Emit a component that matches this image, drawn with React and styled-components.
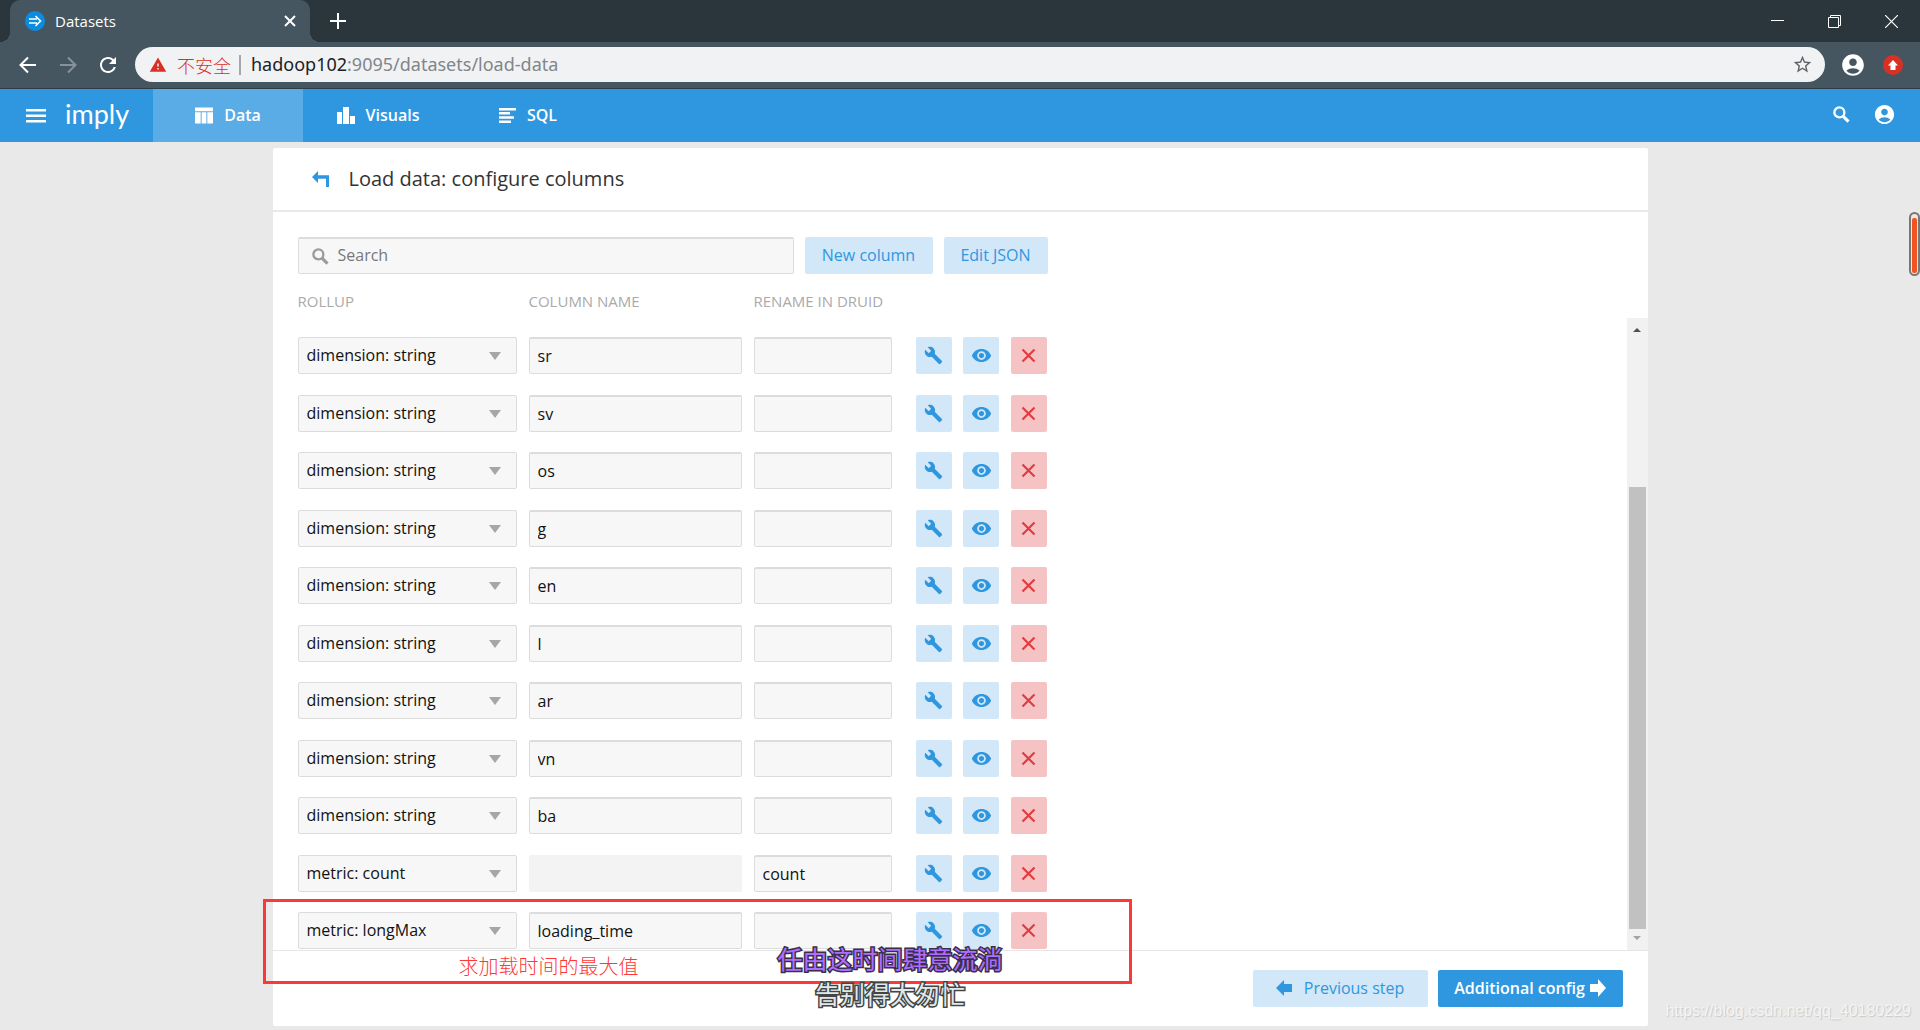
import styled, { createGlobalStyle } from "styled-components"
import {
  MdAccountCircle,
  MdBuild,
  MdRefresh,
  MdStarBorder,
  MdVisibility,
  MdWarning,
} from "react-icons/md"

const GlobalStyle = createGlobalStyle`
    * {
        box-sizing: border-box;
    }
    body {
        margin: 0;
        background-color: #e9e9e9;
        font-family: "Open Sans", "Noto Sans CJK SC", sans-serif;
        color: #111;
    }
    button, input, select {
        font-family: inherit;
    }
    button {
        border: none;
        padding: 0;
        background: none;
        color: inherit;
        cursor: pointer;
    }
    svg {
        display: block;
        flex: none;
    }
`

const Page = styled.div`
    position: relative;
    display: flex;
    flex-direction: column;
    height: 100vh;
    min-height: 800px;
    overflow: hidden;
`

/* browser window */

const TabStrip = styled.div`
    display: flex;
    align-items: center;
    flex: none;
    height: 42px;
    padding-left: 10px;
    background-color: #2b363c;
    color: white;
`

const BrowserTab = styled.div`
    position: relative;
    display: flex;
    align-items: center;
    width: 300px;
    height: 42px;
    padding: 0 14px 0 15px;
    gap: 10px;
    border-radius: 10px 10px 0 0;
    background-color: #455660;
    &::before, &::after {
        content: "";
        position: absolute;
        bottom: 0;
        width: 10px;
        height: 10px;
    }
    &::before {
        left: -10px;
        background: radial-gradient(circle at 0 0, transparent 10px, #455660 10px);
    }
    &::after {
        right: -10px;
        background: radial-gradient(circle at 100% 0, transparent 10px, #455660 10px);
    }
`

const TabTitle = styled.span`
    flex: 1;
    font-size: 15px;
    line-height: 20px;
`

const NewTab = styled.button`
    margin-left: 20px;
`

const WindowButtons = styled.div`
    display: flex;
    margin-left: auto;
`

const WindowButton = styled.button`
    display: flex;
    align-items: center;
    justify-content: center;
    width: 57px;
    height: 37px;
`

const Toolbar = styled.div`
    display: flex;
    align-items: center;
    flex: none;
    height: 47px;
    padding: 0 17px 1px 16px;
    border-bottom: 1px solid #2f3c44;
    background-color: #455660;
    color: white;
`

const NavButtons = styled.div`
    display: flex;
    gap: 16px;
    width: 119px;
`

const NavButton = styled.button`
    color: ${props => props.$dim ? "#87929a" : "white"};
`

const Omnibox = styled.div`
    display: flex;
    align-items: center;
    flex: 1;
    height: 35px;
    padding: 0 12px 0 14px;
    border-radius: 18px;
    background-color: #f1f2f4;
    color: #5f6368;
`

const Insecure = styled.span`
    display: flex;
    align-items: center;
    gap: 10px;
    padding-right: 8px;
    border-right: 2px solid #a5a7aa;
    color: #d93025;
    font-size: 18px;
    line-height: 20px;
    font-family: "Noto Sans CJK SC", sans-serif;
    font-weight: 300;
`

const Url = styled.span`
    flex: 1;
    padding: 0 0 2px 10px;
    font-family: "Noto Sans", sans-serif;
    font-size: 18px;
    line-height: 24px;
    color: #80868b;
    b {
        font-weight: 400;
        color: #202124;
    }
`

const ToolbarIcons = styled.div`
    display: flex;
    align-items: center;
    gap: 17px;
    padding-left: 15px;
`

/* application header */

const Header = styled.header`
    display: flex;
    align-items: center;
    flex: none;
    height: 53px;
    padding-right: 24px;
    background-color: #2f97df;
    color: white;
`

const Brand = styled.div`
    display: flex;
    align-items: center;
    gap: 19px;
    width: 153px;
    padding-left: 26px;
`

const Logo = styled.span`
    padding-bottom: 4px;
    font-family: Lato, sans-serif;
    font-size: 27px;
    line-height: 36px;
`

const NavLink = styled.a`
    display: flex;
    align-items: center;
    justify-content: center;
    gap: 11px;
    width: 150px;
    height: 53px;
    padding-bottom: 1px;
    background-color: ${props => props.$active ? "#59ace5" : "transparent"};
    color: white;
    font-size: 16px;
    font-weight: 600;
    text-decoration: none;
`

const HeaderIcons = styled.div`
    display: flex;
    align-items: center;
    gap: 23px;
    margin-left: auto;
    padding-bottom: 2px;
`

/* main panel */

const Panel = styled.main`
    position: relative;
    display: flex;
    flex-direction: column;
    flex: 1;
    min-height: 0;
    width: calc(100% - 24px);
    max-width: 1375px;
    margin: 6px auto 4px;
    border-radius: 2px;
    background-color: white;
`

const PanelHeader = styled.div`
    display: flex;
    align-items: center;
    gap: 18px;
    flex: none;
    height: 64px;
    padding: 0 39px;
    border-bottom: 2px solid #e9e9e9;
`

const Title = styled.h1`
    margin: 0;
    font-size: 20px;
    line-height: 28px;
    font-weight: 400;
    color: #333;
`

const Filters = styled.div`
    display: flex;
    gap: 11px;
    width: 775px;
    padding: 25px 0 0 25px;
`

const SearchBox = styled.label`
    display: flex;
    align-items: center;
    gap: 9px;
    flex: 1;
    height: 37px;
    padding-left: 13px;
    border: 1px solid #dcdcdc;
    border-top-width: 2px;
    border-radius: 2px;
    background-color: #f7f7f7;
    color: #9b9b9b;
`

const SearchInput = styled.input`
    flex: 1;
    border: none;
    outline: none;
    padding: 0 0 2px;
    background: none;
    font-size: 16px;
    &::placeholder {
        color: #777;
    }
`

const Button = styled.button`
    display: flex;
    align-items: center;
    justify-content: center;
    gap: ${props => props.$gap || 0}px;
    width: ${props => props.$width}px;
    height: 37px;
    padding-bottom: 1px;
    border-radius: 2px;
    background-color: ${props => props.$primary ? "#2f97df" : "#d2e7f8"};
    color: ${props => props.$primary ? "white" : "#2f97df"};
    font-size: 16px;
    font-weight: ${props => props.$primary ? 600 : 500};
`

const columns = `
    display: grid;
    grid-template-columns: 219px 213px 138px 131px;
    column-gap: 12px;
`

const Labels = styled.div`
    ${columns}
    padding: 17px 0 0 25px;
    height: 44px;
    font-size: 15px;
    line-height: 20px;
    color: #aaa;
`

const Body = styled.div`
    display: flex;
    flex: 1;
    min-height: 0;
`

const Rows = styled.div`
    display: flex;
    flex-direction: column;
    justify-content: space-between;
    flex: 1;
    padding: 19px 0 1px 25px;
`

const Row = styled.div`
    ${columns}
`

const SelectBox = styled.div`
    position: relative;
    &::after {
        content: "";
        position: absolute;
        right: 16px;
        top: 15px;
        border: 6px solid transparent;
        border-top: 8px solid #a6a6a6;
        border-bottom: none;
        pointer-events: none;
    }
`

const Select = styled.select`
    appearance: none;
    display: block;
    width: 100%;
    height: 37px;
    padding: 0 8px 1px;
    border: 1px solid #dcdcdc;
    border-radius: 2px;
    background-color: #f7f7f7;
    color: #111;
    font-size: 16px;
`

const Field = styled.input`
    min-width: 0;
    height: 37px;
    padding: 0 8px;
    border: 1px solid #dcdcdc;
    border-top-width: 2px;
    border-radius: 2px;
    background-color: #f7f7f7;
    color: #111;
    font-size: 16px;
    &:disabled {
        border-color: #f3f3f3;
        background-color: #f3f3f3;
    }
`

const Actions = styled.div`
    display: flex;
    justify-content: space-between;
    margin-left: 12px;
    width: 131px;
`

const Action = styled.button`
    display: flex;
    align-items: center;
    justify-content: center;
    width: 36px;
    height: 37px;
    border-radius: 2px;
    background-color: ${props => props.$danger ? "#f6c3c5" : "#d2e7f8"};
    color: ${props => props.$danger ? "#e13c40" : "#2f97df"};
`

const Scrollbar = styled.div`
    display: flex;
    flex-direction: column;
    align-items: center;
    width: 21px;
    padding: 10px 0;
    background-color: #f1f1f1;
`

const Thumb = styled.div`
    flex: 1;
    width: 17px;
    margin: 155px 0 7px;
    background-color: #c1c1c1;
`

const Arrow = styled.div`
    border: 4px solid transparent;
    border-${props => props.$up ? "bottom" : "top"}-color: ${props => props.$up ? "#505050" : "#a3a3a3"};
    border-${props => props.$up ? "top" : "bottom"}: none;
`

const Footer = styled.div`
    display: flex;
    justify-content: flex-end;
    gap: 10px;
    flex: none;
    height: 76px;
    padding: 19px 25px 0;
    border-top: 1px solid #e6e6e6;
`

/* things floating over the page */

const Highlight = styled.div`
    position: absolute;
    left: -10px;
    bottom: 42px;
    width: 869px;
    height: 85px;
    padding: 50px 0 0 193px;
    border: 3px solid #ff3737;
    color: #ff3737;
    font-family: "Noto Sans CJK SC", sans-serif;
    font-size: 20px;
    line-height: 28px;
    font-weight: 300;
    pointer-events: none;
`

const Lyrics = styled.div`
    position: absolute;
    left: 504px;
    bottom: 15px;
    width: 227px;
    font-family: "Noto Sans CJK SC", sans-serif;
    font-size: 25px;
    line-height: 35px;
    text-align: center;
    color: #dfe9ea;
    -webkit-text-stroke: 3px #444;
    paint-order: stroke fill;
    pointer-events: none;
    p {
        margin: 0;
    }
    p:first-child {
        color: #b06cff;
        -webkit-text-stroke-color: #38304a;
    }
`

const SideHandle = styled.div`
    position: absolute;
    right: 0;
    top: 212px;
    width: 11px;
    height: 64px;
    padding: 4px 1px 1px;
    border: 2px solid #777;
    border-radius: 6px;
    background-color: #f4e6e0;
    &::before {
        content: "";
        display: block;
        height: 100%;
        border-radius: 2px;
        background-color: #f05423;
    }
`

const Watermark = styled.div`
    position: absolute;
    right: 9px;
    bottom: 7px;
    font-family: "Liberation Sans", Arial, sans-serif;
    font-size: 16px;
    line-height: 24px;
    color: #f4f4f4;
    text-shadow: 1px 1px 1px #c8c8c8;
`

const SearchIcon = ({ size }) => (
  <svg width={size} height={size} viewBox="0 0 16 16" fill="none" stroke="currentColor">
    <circle cx="6" cy="6" r="4.7" strokeWidth="2.2" />
    <path d="M9.2 9.2 14.6 14.6" strokeWidth="3" />
  </svg>
)

const ArrowIcon = ({ flip }) => (
  <svg width="16" height="18" viewBox="0 0 16 18" fill="currentColor">
    <path d={flip ? "M16 9 8 0v5H0v8h8v5z" : "M0 9 8 1v4h8v8H8v4z"} />
  </svg>
)

const CrossIcon = () => (
  <svg width="15" height="15" viewBox="0 0 15 15" stroke="currentColor" strokeWidth="2.2">
    <path d="M1.5 1.5 13.5 13.5M13.5 1.5 1.5 13.5" />
  </svg>
)

const rollups = ["dimension: string", "metric: count", "metric: longMax"]

const rows = [
  { rollup: "dimension: string", name: "sr" },
  { rollup: "dimension: string", name: "sv" },
  { rollup: "dimension: string", name: "os" },
  { rollup: "dimension: string", name: "g" },
  { rollup: "dimension: string", name: "en" },
  { rollup: "dimension: string", name: "l" },
  { rollup: "dimension: string", name: "ar" },
  { rollup: "dimension: string", name: "vn" },
  { rollup: "dimension: string", name: "ba" },
  { rollup: "metric: count", name: "", rename: "count" },
  { rollup: "metric: longMax", name: "loading_time" },
]

const Browser = () => {
  return (
    <>
      <TabStrip>
        <BrowserTab>
          <svg width="20" height="20" viewBox="0 0 20 20" fill="none" stroke="white" strokeWidth="1.6">
            <circle cx="10" cy="10" r="10" fill="#0a8ce0" stroke="none" />
            <path d="M4 8h8M4 12h8M10.5 5l5 5-5 5" />
          </svg>
          <TabTitle>Datasets</TabTitle>
          <button aria-label="Close tab">
            <svg width="12" height="12" viewBox="0 0 12 12" stroke="white" strokeWidth="2">
              <path d="M1 1 11 11M11 1 1 11" />
            </svg>
          </button>
        </BrowserTab>
        <NewTab aria-label="New tab">
          <svg width="16" height="16" viewBox="0 0 16 16" stroke="white" strokeWidth="2">
            <path d="M8 0V16M0 8H16" />
          </svg>
        </NewTab>
        <WindowButtons>
          <WindowButton aria-label="Minimize">
            <svg width="13" height="13" viewBox="0 0 13 13" stroke="white">
              <path d="M0 5.5H13" />
            </svg>
          </WindowButton>
          <WindowButton aria-label="Restore">
            <svg width="13" height="13" viewBox="0 0 13 13" fill="none" stroke="white">
              <path d="M.5 2.5h10v10H.5zM2.5 2.5v-2h10v10h-2" />
            </svg>
          </WindowButton>
          <WindowButton aria-label="Close">
            <svg width="13" height="13" viewBox="0 0 13 13" stroke="white" strokeWidth="1.2">
              <path d="M0 0 13 13M13 0 0 13" />
            </svg>
          </WindowButton>
        </WindowButtons>
      </TabStrip>
      <Toolbar>
        <NavButtons>
          <NavButton aria-label="Back">
            <svg width="24" height="24" viewBox="0 0 24 24" fill="none" stroke="currentColor" strokeWidth="2">
              <path d="M20 12H4.500M12 4.500 4.500 12 12 19.500" />
            </svg>
          </NavButton>
          <NavButton aria-label="Forward" $dim>
            <svg width="24" height="24" viewBox="0 0 24 24" fill="none" stroke="currentColor" strokeWidth="2">
              <path d="M4 12H19.500M12 4.500 19.500 12 12 19.500" />
            </svg>
          </NavButton>
          <NavButton aria-label="Reload">
            <MdRefresh size={24} />
          </NavButton>
        </NavButtons>
        <Omnibox>
          <Insecure>
            <MdWarning size={18} />
            不安全
          </Insecure>
          <Url><b>hadoop102</b>:9095/datasets/load-data</Url>
          <MdStarBorder size={21} />
        </Omnibox>
        <ToolbarIcons>
          <MdAccountCircle size={26} />
          <svg width="20" height="20" viewBox="0 0 20 20" fill="white">
            <circle cx="10" cy="10" r="10" fill="#d93025" />
            <path d="M10 5 15 10.500H12.500V15H7.500V10.500H5z" />
          </svg>
        </ToolbarIcons>
      </Toolbar>
    </>
  )
}

const App = () => {
  return (
    <Page>
      <GlobalStyle />
      <Browser />
      <Header>
        <Brand>
          <svg width="20" height="14" viewBox="0 0 20 14" fill="currentColor">
            <path d="M0 0h20v2.500H0zM0 5.500h20v2.500H0zM0 11h20v2.500H0z" />
          </svg>
          <Logo>imply</Logo>
        </Brand>
        <NavLink href="#data" $active>
          <svg width="18" height="17" viewBox="0 0 19 17" fill="currentColor">
            <path d="M0 0h19v4H0zM0 5h6v12H0zM7 5h5v12H7zM13 5h6v12h-6z" />
          </svg>
          Data
        </NavLink>
        <NavLink href="#visuals">
          <svg width="18" height="17" viewBox="0 0 18 17" fill="currentColor">
            <path d="M0 5h5v12H0zM6 0h6v17H6zM13 9h5v8h-5z" />
          </svg>
          Visuals
        </NavLink>
        <NavLink href="#sql">
          <svg width="17" height="15" viewBox="0 0 17 15" fill="currentColor">
            <path d="M0 0h17v2.500H0zM0 4h11v2.500H0zM0 8.300h15v2.500H0zM0 12.500h12V15H0z" />
          </svg>
          SQL
        </NavLink>
        <HeaderIcons>
          <SearchIcon size={17} />
          <MdAccountCircle size={23} />
        </HeaderIcons>
      </Header>

      <Panel>
        <PanelHeader>
          <svg width="19" height="17" viewBox="0 0 19 17" fill="#2f97df">
            <path d="M0 6 6 0V4.300H17V16H14V7.800H6V12z" />
          </svg>
          <Title>Load data: configure columns</Title>
        </PanelHeader>
        <Filters>
          <SearchBox>
            <SearchIcon size={17} />
            <SearchInput placeholder="Search" aria-label="Search" />
          </SearchBox>
          <Button $width={128}>New column</Button>
          <Button $width={104}>Edit JSON</Button>
        </Filters>
        <Labels>
          <span>ROLLUP</span>
          <span>COLUMN NAME</span>
          <span>RENAME IN DRUID</span>
        </Labels>
        <Body>
          <Rows>
            {rows.map((row, i) => (
              <Row key={i}>
                <SelectBox>
                  <Select aria-label="Rollup" defaultValue={row.rollup}>
                    {rollups.map(r => <option key={r}>{r}</option>)}
                  </Select>
                </SelectBox>
                <Field aria-label="Column name" defaultValue={row.name} disabled={!row.name} />
                <Field aria-label="Rename in Druid" defaultValue={row.rename} />
                <Actions>
                  <Action aria-label="Configure"><MdBuild size={19} /></Action>
                  <Action aria-label="Preview"><MdVisibility size={21} /></Action>
                  <Action aria-label="Remove" $danger><CrossIcon /></Action>
                </Actions>
              </Row>
            ))}
          </Rows>
          <Scrollbar>
            <Arrow $up />
            <Thumb />
            <Arrow />
          </Scrollbar>
        </Body>
        <Footer>
          <Button $width={175} $gap={12}><ArrowIcon /> Previous step</Button>
          <Button $width={185} $gap={5} $primary>Additional config <ArrowIcon flip /></Button>
        </Footer>
        <Highlight>求加载时间的最大值</Highlight>
        <Lyrics>
          <p>任由这时间肆意流淌</p>
          <p>告别得太匆忙</p>
        </Lyrics>
      </Panel>

      <SideHandle />
      <Watermark>https://blog.csdn.net/qq_40180229</Watermark>
    </Page>
  )
}

export default App
